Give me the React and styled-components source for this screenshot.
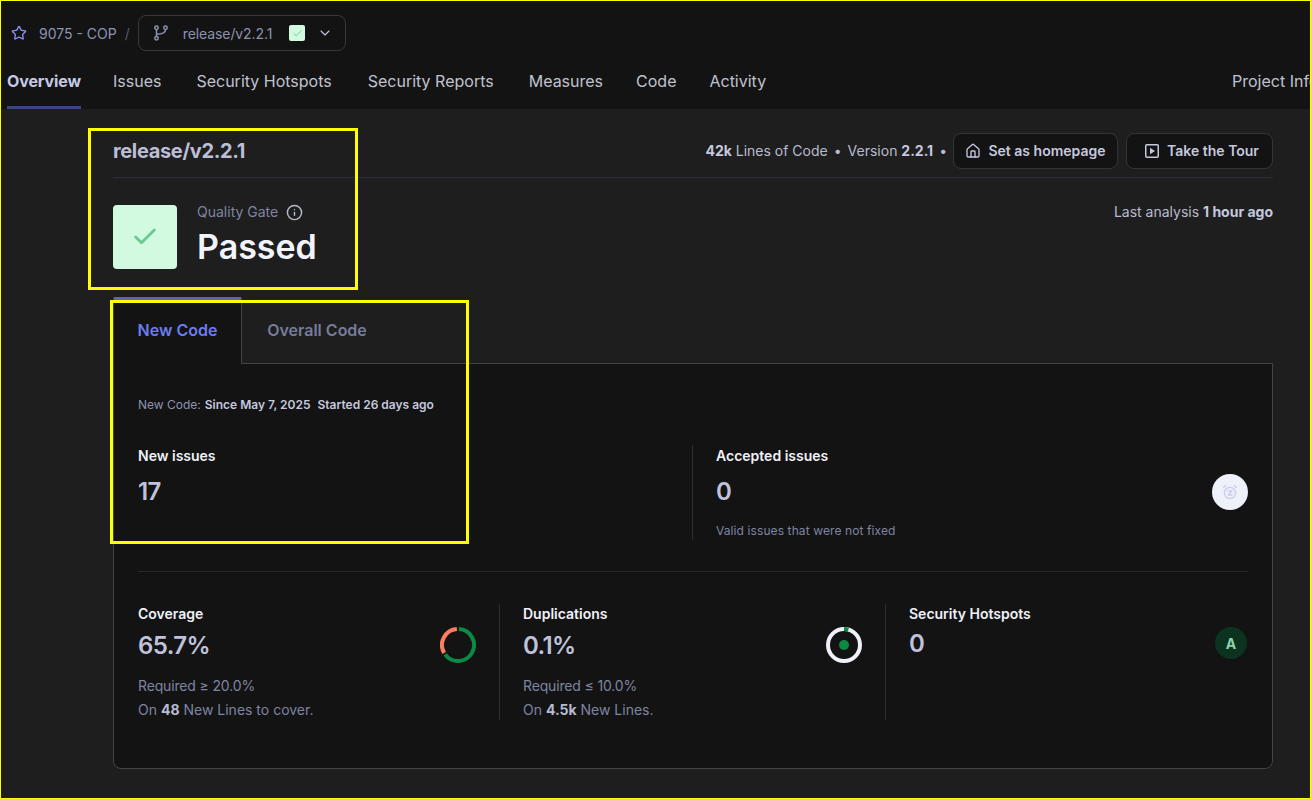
import React from "react";
import styled, { createGlobalStyle } from "styled-components";
import { Star, ChevronDown, Check, Info, Home } from "lucide-react";

const Global = createGlobalStyle`
  html, body { margin: 0; padding: 0; background: #1e1e1e; }
  body { font-family: Inter, "Liberation Sans", sans-serif; color: #c5c8de; }
  * { box-sizing: border-box; }
`;

const Page = styled.div`
  position: relative;
  width: 1311px;
  height: 799px;
  overflow: hidden;
  background: #1e1e1e;
`;
const Frame = styled.div`
  position: absolute;
  left: 0;
  top: 0;
  width: 1311px;
  height: 799px;
  border: 1px solid #ffff00;
  pointer-events: none;
`;
const Note = styled.div`
  position: absolute;
  left: ${p => p.$x}px;
  top: ${p => p.$y}px;
  width: ${p => p.$w}px;
  height: ${p => p.$h}px;
  border: 3px solid #ffff00;
  pointer-events: none;
`;

const Header = styled.header`
  background: #131313;
  height: 109px;
  display: flex;
  flex-direction: column;
`;
const Crumbs = styled.div`
  display: flex;
  align-items: center;
  height: 36px;
  margin-top: 15px;
  padding-left: 11px;
  font-size: 14px;
  color: #8d92b0;
`;
const Project = styled.span`
  margin-left: 12px;
`;
const Slash = styled.span`
  margin: 0 8px 0 8px;
  color: #55586a;
`;
const BranchBox = styled.div`
  display: flex;
  align-items: center;
  width: 208px;
  height: 36px;
  padding-left: 14px;
  border: 1px solid #37383f;
  border-radius: 8px;
`;
const BranchName = styled.span`
  margin-left: 14px;
  font-size: 14px;
  letter-spacing: -0.1px;
`;
const MiniBadge = styled.span`
  display: flex;
  align-items: center;
  justify-content: center;
  width: 16px;
  height: 16px;
  margin-left: 17px;
  background: #d1fae0;
  border-radius: 2px;
  color: #6cc795;
`;
const Chevron = styled(ChevronDown)`
  margin-left: 12px;
  color: #c5c8de;
`;
const Nav = styled.nav`
  display: flex;
  height: 58px;
  padding-left: 7px;
  font-size: 16px;
`;
const NavItem = styled.div`
  height: 100%;
  margin-right: ${p => p.$gap}px;
  padding-top: 20px;
  color: ${p => (p.$active ? "#c5c9e6" : "#c0c2d0")};
  font-weight: ${p => (p.$active ? 700 : 400)};
  letter-spacing: ${p => (p.$active ? "-0.1px" : "0")};
  border-bottom: 3px solid ${p => (p.$active ? "#3c4584" : "transparent")};
  white-space: nowrap;
`;
const NavEnd = styled(NavItem)`
  margin-left: auto;
  margin-right: 0;
  width: 79px;
  overflow: hidden;
`;

const Main = styled.main`
  padding: 24px 38px 0 113px;
`;
const TitleRow = styled.div`
  display: flex;
  align-items: center;
  justify-content: space-between;
  height: 45px;
  padding-bottom: 9px;
  border-bottom: 1px solid #2a2e36;
`;
const Branch = styled.h1`
  margin: 0;
  font-size: 20px;
  font-weight: 700;
  line-height: 36px;
  letter-spacing: -0.35px;
  color: #bcbfd6;
`;
const MetaRow = styled.div`
  display: flex;
  align-items: center;
  font-size: 14px;
  color: #b8bbcf;
`;
const Dot = styled.span`
  margin: 0 6px;
`;
const Strong = styled.b`
  font-weight: 700;
  color: #c5c8de;
`;
const Button = styled.button`
  display: flex;
  align-items: center;
  justify-content: center;
  gap: 7px;
  width: ${p => p.$w}px;
  height: 36px;
  margin-left: ${p => p.$ml}px;
  padding: 0 0 0 ${p => p.$pl || 0}px;
  background: #131313;
  border: 1px solid #33343a;
  border-radius: 8px;
  color: #c5c8de;
  font: 600 14px Inter, "Liberation Sans", sans-serif;
`;
const GateRow = styled.div`
  display: flex;
  justify-content: space-between;
  padding-top: 27px;
  height: 119px;
`;
const GateLeft = styled.div`
  display: flex;
`;
const GateBox = styled.div`
  display: flex;
  align-items: center;
  justify-content: center;
  width: 64px;
  height: 64px;
  background: #d1fae0;
  border-radius: 4px;
  color: #6cc795;
`;
const GateText = styled.div`
  margin-left: 20px;
`;
const GateLabel = styled.div`
  display: flex;
  align-items: center;
  gap: 8px;
  height: 16px;
  margin-top: -1px;
  font-size: 14px;
  line-height: 16px;
  color: #7f84a2;
`;
const GateValue = styled.div`
  margin-top: 8px;
  font-size: 34px;
  line-height: 38px;
  font-weight: 600;
  color: #f3f4fb;
`;
const Last = styled.div`
  margin-top: -1px;
  font-size: 14px;
  line-height: 16px;
  color: #b8bbcf;
`;
const Tabs = styled.div`
  display: flex;
  height: 67px;
`;
const Tab = styled.div`
  display: flex;
  align-items: center;
  justify-content: center;
  width: ${p => p.$w}px;
  padding-bottom: 6px;
  font-size: 16px;
  font-weight: 600;
  color: ${p => (p.$active ? "#6b7cf0" : "#767c9c")};
  background: ${p => (p.$active ? "#131313" : "transparent")};
  border-top: 4px solid ${p => (p.$active ? "#5a66b5" : "transparent")};
  border-right: 1px solid ${p => (p.$active ? "#444" : "transparent")};
  border-left: 1px solid ${p => (p.$active ? "#444" : "transparent")};
  border-radius: 2px 2px 0 0;
`;
const Panel = styled.section`
  height: 406px;
  margin-top: -1px;
  padding: 34px 24px 0;
  background: #131313;
  border: 1px solid #444;
  border-radius: 0 0 8px 8px;
`;
const Since = styled.div`
  font-size: 12px;
  line-height: 14px;
  color: #8d92b0;
`;
const SinceValue = styled.b`
  margin-left: 4px;
  font-weight: 600;
  color: #c5c8de;
`;
const IssueRow = styled.div`
  display: grid;
  grid-template-columns: 554px 1fr;
  height: 160px;
  padding-top: 33px;
  border-bottom: 1px solid #26272b;
`;
const IssueCell = styled.div`
  position: relative;
  height: 95px;
  padding-left: ${p => (p.$divider ? "23px" : "0")};
  border-left: ${p => (p.$divider ? "1px solid #2c2d33" : "none")};
`;
const CellTitle = styled.div`
  padding-top: 3px;
  font-size: 14px;
  line-height: 16px;
  font-weight: 600;
  color: #f0f1f8;
`;
const MeasureTitle = styled(CellTitle)`
  padding-top: 2px;
`;
const BigValue = styled.div`
  margin-top: 12px;
  font-size: 24px;
  line-height: 32px;
  font-weight: 600;
  letter-spacing: -0.6px;
  color: #bfc2da;
`;
const Small = styled.div`
  margin-top: 15px;
  font-size: 12px;
  line-height: 16px;
  letter-spacing: 0.1px;
  color: #7f84a2;
`;
const RoundIcon = styled.div`
  position: absolute;
  right: 0;
  top: 29px;
  display: flex;
  align-items: center;
  justify-content: center;
  width: 36px;
  height: 36px;
  border-radius: 50%;
  background: #eef0fa;
  color: #c9cdea;
`;
const Measures = styled.div`
  display: grid;
  grid-template-columns: 361px 386px 1fr;
  padding-top: 32px;
`;
const Measure = styled.div`
  position: relative;
  height: 116px;
  padding-left: ${p => (p.$divider ? "23px" : "0")};
  border-left: ${p => (p.$divider ? "1px solid #2c2d33" : "none")};
`;
const MeasureValue = styled(BigValue)`
  margin-top: ${p => p.$mt || 8}px;
`;
const NoteLine = styled.div`
  font-size: 14px;
  line-height: 24px;
  letter-spacing: ${p => (p.$tight ? "-0.15px" : "0")};
  color: #7f84a2;
  b { font-weight: 700; color: #b8bbcf; }
`;
const Notes = styled.div`
  margin-top: 12px;
`;
const Gauge = styled.svg`
  position: absolute;
  top: 23px;
  right: ${p => p.$r}px;
`;
const Rating = styled.div`
  position: absolute;
  right: 1px;
  top: 23px;
  display: flex;
  align-items: center;
  justify-content: center;
  width: 32px;
  height: 32px;
  border-radius: 50%;
  background: #0b3320;
  color: #8ed3a9;
  font-size: 14px;
  font-weight: 700;
`;

const arc = (from, to) => {
  const pt = a => {
    const r = ((a - 90) * Math.PI) / 180;
    return `${18 + 16 * Math.cos(r)} ${18 + 16 * Math.sin(r)}`;
  };
  return `M${pt(from)} A16 16 0 ${to - from > 180 ? 1 : 0} 1 ${pt(to)}`;
};

const CoverageGauge = () => (
  <Gauge $r={23} width="36" height="36" viewBox="0 0 36 36" fill="none" strokeWidth="4">
    <path d={arc(3, 234)} stroke="#0a8a45" />
    <path d={arc(240, 356)} stroke="#fb7d5f" />
  </Gauge>
);

const DuplicationGauge = () => (
  <Gauge $r={23} width="36" height="36" viewBox="0 0 36 36" fill="none">
    <circle cx="18" cy="18" r="16" stroke="#eff1fa" strokeWidth="4" />
    <path d={arc(0, 16)} stroke="#0a8a45" strokeWidth="4" />
    <circle cx="18" cy="18" r="5" fill="#0a8a45" />
  </Gauge>
);

const BranchIcon = () => (
  <svg width="16" height="16" viewBox="0 0 16 16" fill="none" stroke="#8d92b0" strokeWidth="1.5">
    <circle cx="3.5" cy="2.8" r="1.7" />
    <circle cx="12.5" cy="2.8" r="1.7" />
    <circle cx="3.5" cy="13.2" r="1.7" />
    <path d="M3.5 4.5 V11.5 M12.5 4.5 C12.5 8 9 9.2 3.5 9.2" />
  </svg>
);

const SnoozeIcon = () => (
  <svg width="16" height="16" viewBox="0 0 16 16" fill="none" stroke="currentColor" strokeWidth="1.3" strokeLinecap="round" strokeLinejoin="round">
    <circle cx="8" cy="9" r="5.6" />
    <path d="M1.6 3.4 L3.6 1.6 M14.4 3.4 L12.4 1.6" />
    <path d="M6 7 H10 L6 11 H10" />
  </svg>
);

const TourIcon = () => (
  <svg width="16" height="16" viewBox="0 0 16 16" fill="none">
    <rect x="1.75" y="1.75" width="12.5" height="12.5" rx="1" stroke="currentColor" strokeWidth="1.5" />
    <path d="M6 4.8 L11 8 L6 11.2 Z" fill="currentColor" />
  </svg>
);

export default function App() {
  return (
    <Page>
      <Global />
      <Header>
        <Crumbs>
          <Star size={16} color="#8f8cf5" />
          <Project>9075 - COP</Project>
          <Slash>/</Slash>
          <BranchBox>
            <BranchIcon />
            <BranchName>release/v2.2.1</BranchName>
            <MiniBadge><Check size={11} /></MiniBadge>
            <Chevron size={16} strokeWidth={1.6} />
          </BranchBox>
        </Crumbs>
        <Nav>
          <NavItem $active $gap={32}>Overview</NavItem>
          <NavItem $gap={35}>Issues</NavItem>
          <NavItem $gap={36}>Security Hotspots</NavItem>
          <NavItem $gap={35}>Security Reports</NavItem>
          <NavItem $gap={33}>Measures</NavItem>
          <NavItem $gap={33}>Code</NavItem>
          <NavItem $gap={0}>Activity</NavItem>
          <NavEnd>Project Information</NavEnd>
        </Nav>
      </Header>
      <Main>
        <TitleRow>
          <Branch>release/v2.2.1</Branch>
          <MetaRow>
            <Strong>42k</Strong>&nbsp;Lines of Code
            <Dot>•</Dot>
            Version&nbsp;<Strong>2.2.1</Strong>
            <Dot>•</Dot>
            <Button $w={165} $ml={0}><Home size={16} />Set as homepage</Button>
            <Button $w={147} $ml={8} $pl={4}><TourIcon />Take the Tour</Button>
          </MetaRow>
        </TitleRow>
        <GateRow>
          <GateLeft>
            <GateBox><Check size={28} strokeWidth={2.4} /></GateBox>
            <GateText>
              <GateLabel>Quality Gate <Info size={17} color="#b8bbcf" /></GateLabel>
              <GateValue>Passed</GateValue>
            </GateText>
          </GateLeft>
          <Last>Last analysis <Strong>1 hour ago</Strong></Last>
        </GateRow>
        <Tabs>
          <Tab $active $w={129}>New Code</Tab>
          <Tab $w={150}>Overall Code</Tab>
        </Tabs>
        <Panel>
          <Since>
            New Code:<SinceValue>Since May 7, 2025</SinceValue>
            <SinceValue>&nbsp;Started 26 days ago</SinceValue>
          </Since>
          <IssueRow>
            <IssueCell>
              <CellTitle>New issues</CellTitle>
              <BigValue>17</BigValue>
            </IssueCell>
            <IssueCell $divider>
              <CellTitle>Accepted issues</CellTitle>
              <BigValue>0</BigValue>
              <Small>Valid issues that were not fixed</Small>
              <RoundIcon><SnoozeIcon /></RoundIcon>
            </IssueCell>
          </IssueRow>
          <Measures>
            <Measure>
              <MeasureTitle>Coverage</MeasureTitle>
              <MeasureValue>65.7%</MeasureValue>
              <Notes>
                <NoteLine $tight>Required ≥ 20.0%</NoteLine>
                <NoteLine>On <b>48</b> New Lines to cover.</NoteLine>
              </Notes>
              <CoverageGauge />
            </Measure>
            <Measure $divider>
              <MeasureTitle>Duplications</MeasureTitle>
              <MeasureValue>0.1%</MeasureValue>
              <Notes>
                <NoteLine $tight>Required ≤ 10.0%</NoteLine>
                <NoteLine>On <b>4.5k</b> New Lines.</NoteLine>
              </Notes>
              <DuplicationGauge />
            </Measure>
            <Measure $divider>
              <MeasureTitle>Security Hotspots</MeasureTitle>
              <MeasureValue $mt={6}>0</MeasureValue>
              <Rating>A</Rating>
            </Measure>
          </Measures>
        </Panel>
      </Main>
      <Note $x={88} $y={128} $w={270} $h={162} />
      <Note $x={110} $y={300} $w={359} $h={244} />
      <Frame />
    </Page>
  );
}
